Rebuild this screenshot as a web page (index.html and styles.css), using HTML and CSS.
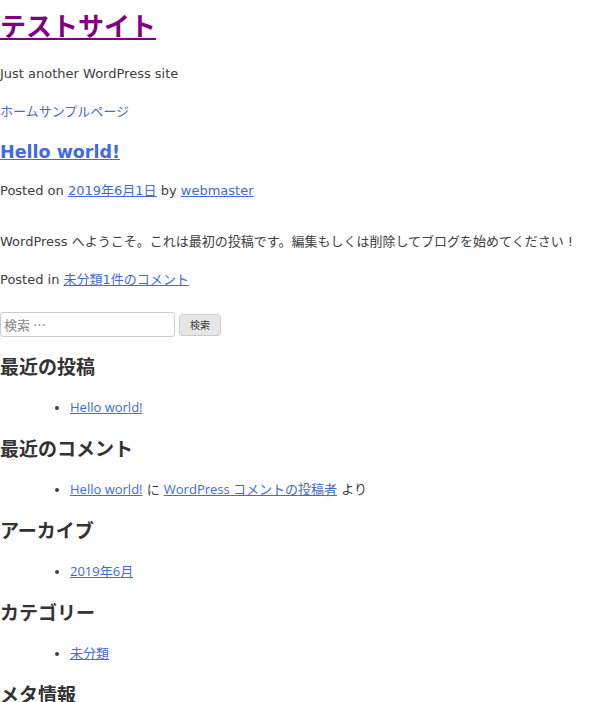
FILE: index.html
```html
<!DOCTYPE html>
<html lang="ja">
<head>
  <meta charset="UTF-8" />
  <meta name="viewport" content="width=device-width, initial-scale=1.0"/>
  <title>テストサイト – Just another WordPress site</title>
  <link rel="stylesheet" href="styles.css">
</head>
<body>
  <div id="page" class="site">
    <header class="site-header">
      <p class="site-title"><a href="#" class="visited">テストサイト</a></p>
      <p class="site-description">Just another WordPress site</p>
      <nav class="main-navigation">
        <ul class="menu">
          <li><a href="#">ホーム</a></li>
          <li><a href="#">サンプルページ</a></li>
        </ul>
      </nav>
    </header>

    <main class="site-main">
      <article class="post">
        <header class="entry-header">
          <h2 class="entry-title"><a href="#">Hello world!</a></h2>
          <div class="entry-meta">
            Posted on <a href="#">2019年6月1日</a> by <a href="#">webmaster</a>
          </div>
        </header>
        <div class="entry-content">
          <p>WordPress へようこそ。これは最初の投稿です。編集もしくは削除してブログを始めてください !</p>
        </div>
        <footer class="entry-footer">
          Posted in <a href="#">未分類</a><a href="#">1件のコメント</a>
        </footer>
      </article>
    </main>

    <aside class="widget-area">
      <section class="widget widget-search">
        <form class="search-form">
          <input type="search" class="search-field" placeholder="検索 …">
          <button type="button" class="search-submit">検索</button>
        </form>
      </section>

      <section class="widget">
        <h2 class="widget-title">最近の投稿</h2>
        <ul>
          <li><a href="#" class="alt">Hello world!</a></li>
        </ul>
      </section>

      <section class="widget">
        <h2 class="widget-title">最近のコメント</h2>
        <ul>
          <li><a href="#" class="alt">Hello world!</a> に <a href="#" class="alt">WordPress コメントの投稿者</a> より</li>
        </ul>
      </section>

      <section class="widget">
        <h2 class="widget-title">アーカイブ</h2>
        <ul>
          <li><a href="#" class="alt">2019年6月</a></li>
        </ul>
      </section>

      <section class="widget">
        <h2 class="widget-title">カテゴリー</h2>
        <ul>
          <li><a href="#" class="alt">未分類</a></li>
        </ul>
      </section>

      <section class="widget">
        <h2 class="widget-title">メタ情報</h2>
      </section>
    </aside>
  </div>
</body>
</html>
```

FILE: styles.css
```css
body {
  margin: 0;
  color: #404040;
  font-family: "DejaVu Sans", "Noto Sans CJK JP", sans-serif;
  font-size: 13px;
  line-height: 1.5;
  background: #fff;
}
a {
  color: #4169e1;
}
a.visited {
  color: #800080;
}
p {
  margin: 0 0 1.5em;
}
.site-title {
  margin: 7px 0 0;
  font-size: 26px;
  font-weight: bold;
  line-height: 1.6;
}
.site-description {
  margin: 15px 0 19px;
}
.main-navigation ul {
  display: flex;
  list-style: none;
  margin: 0;
  padding: 0;
}
.main-navigation a {
  text-decoration: none;
}
.entry-title {
  margin: 17px 0 16px;
  font-size: 17.5px;
  line-height: 1.5;
}
.entry-meta {
  margin-bottom: 32px;
}
.entry-content p {
  margin: 0 0 18px;
}
.entry-footer {
  margin-bottom: 23px;
}
.search-form {
  display: flex;
  align-items: center;
  gap: 4px;
  margin-bottom: 16px;
}
.search-field {
  width: 175px;
  height: 25px;
  box-sizing: border-box;
  margin: 0;
  padding: 2px 3px;
  border: 1px solid #ccc;
  border-radius: 3px;
  font-family: "Noto Sans CJK JP", sans-serif;
  font-size: 13px;
  color: #666;
}
.search-field::placeholder {
  color: #888;
}
.search-submit {
  width: 42px;
  height: 22px;
  margin: 0;
  padding: 0;
  border: 1px solid #ccc;
  border-radius: 3px;
  background: #e6e6e6;
  font-family: "Noto Sans CJK JP", sans-serif;
  font-size: 10px;
  color: rgba(0, 0, 0, 0.8);
}
.widget-title {
  margin: 0;
  font-size: 19px;
  line-height: 1.5;
  color: #333;
}
.widget ul {
  margin: 16px 0 18px;
  padding-left: 70px;
  list-style: disc;
}
.widget a.alt {
  color: #4169e1;
  font-family: "Open Sans", "Noto Sans CJK JP", sans-serif;
}
```
